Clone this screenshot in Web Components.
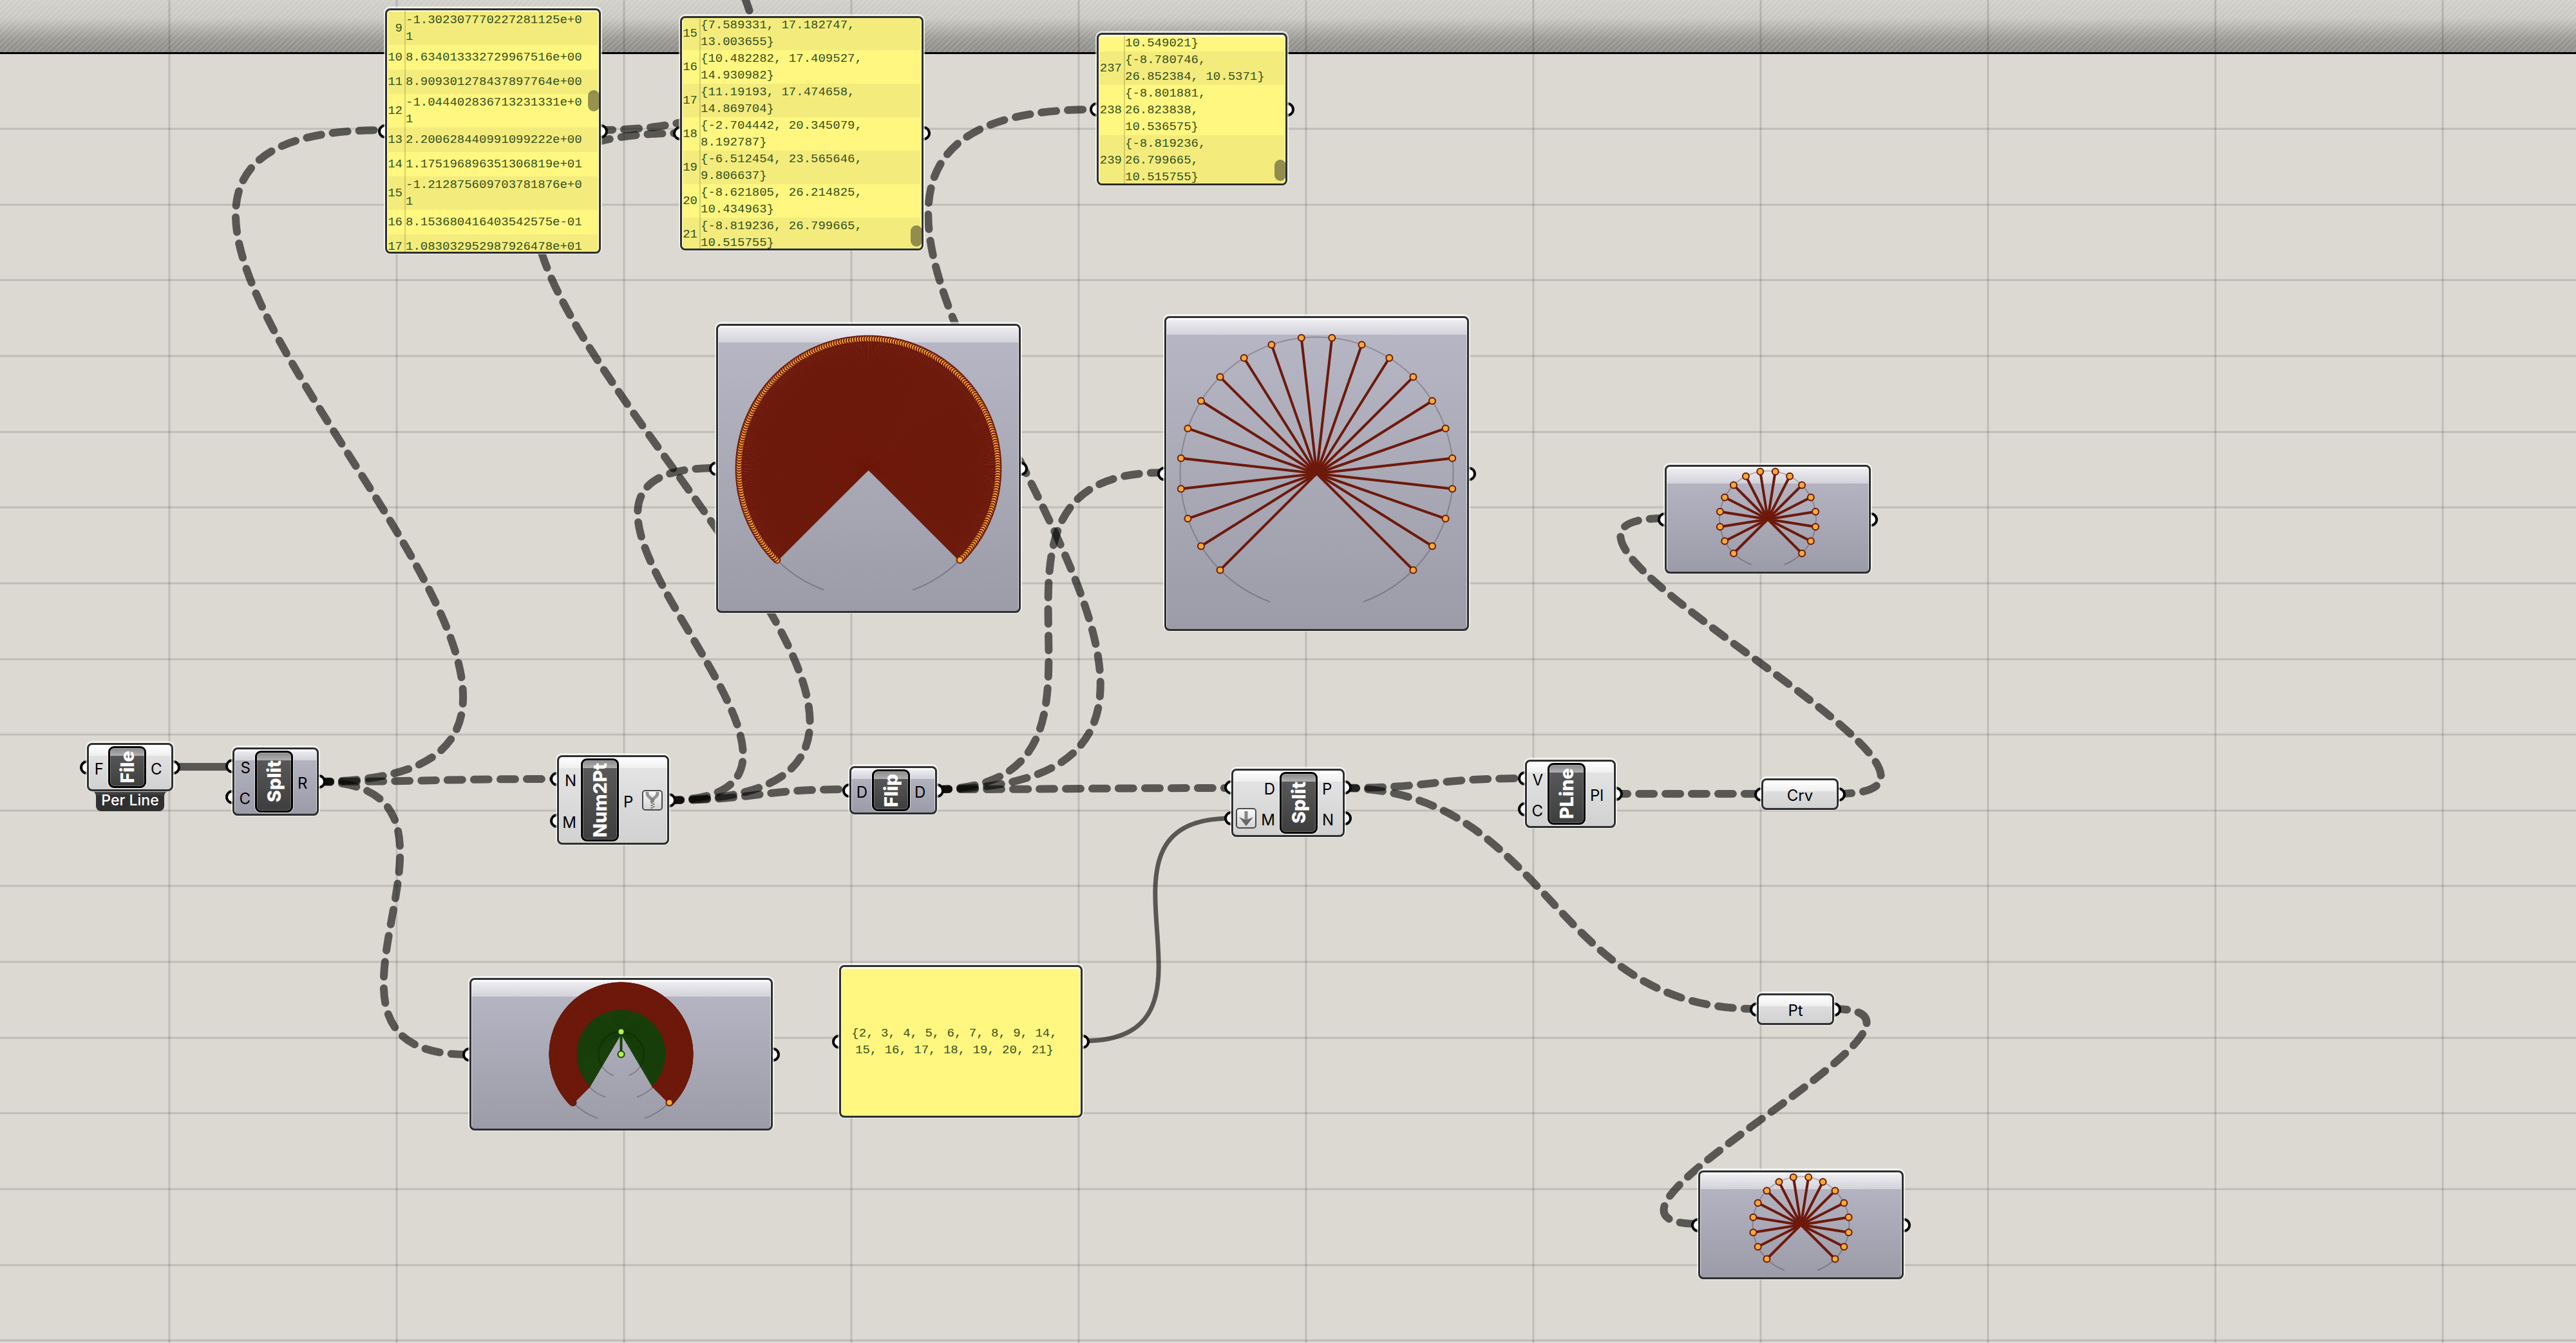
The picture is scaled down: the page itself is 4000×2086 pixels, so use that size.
<!DOCTYPE html>
<html lang="en">
<head>
<meta charset="utf-8">
<title>Grasshopper definition</title>
<style>
  body {
    margin: 0;
    font-family: Inter, "Liberation Sans", sans-serif;
    color: #000;
  }
</style>
</head>
<body>

<gh-canvas>
  <gh-panel x="598" y="13" width="335" height="381" gutter="31" pad="2" thumb="127">
    <gh-item index="9" shaded>-1.302307770227281125e+0<br>1</gh-item>
    <gh-item index="10">8.634013332729967516e+00</gh-item>
    <gh-item index="11" shaded>8.909301278437897764e+00</gh-item>
    <gh-item index="12">-1.044402836713231331e+0<br>1</gh-item>
    <gh-item index="13" shaded>2.200628440991099222e+00</gh-item>
    <gh-item index="14">1.175196896351306819e+01</gh-item>
    <gh-item index="15" shaded>-1.212875609703781876e+0<br>1</gh-item>
    <gh-item index="16">8.153680416403542575e-01</gh-item>
    <gh-item index="17" shaded>1.083032952987926478e+01</gh-item>
  </gh-panel>

  <gh-panel x="1056" y="25" width="378" height="364" gutter="31" pad="-2" thumb="325">
    <gh-item index="15" shaded>{7.589331, 17.182747,<br>13.003655}</gh-item>
    <gh-item index="16">{10.482282, 17.409527,<br>14.930982}</gh-item>
    <gh-item index="17" shaded>{11.19193, 17.474658,<br>14.869704}</gh-item>
    <gh-item index="18">{-2.704442, 20.345079,<br>8.192787}</gh-item>
    <gh-item index="19" shaded>{-6.512454, 23.565646,<br>9.806637}</gh-item>
    <gh-item index="20">{-8.621805, 26.214825,<br>10.434963}</gh-item>
    <gh-item index="21" shaded>{-8.819236, 26.799665,<br>10.515755}</gh-item>
  </gh-panel>

  <gh-panel x="1703" y="51" width="296" height="237" gutter="43" pad="0" thumb="197">
    <gh-item tight>10.549021}</gh-item>
    <gh-item index="237" shaded>{-8.780746,<br>26.852384, 10.5371}</gh-item>
    <gh-item index="238">{-8.801881,<br>26.823838,<br>10.536575}</gh-item>
    <gh-item index="239" shaded>{-8.819236,<br>26.799665,<br>10.515755}</gh-item>
  </gh-panel>

  <gh-panel x="1303" y="1499" width="378" height="237" note>{2, 3, 4, 5, 6, 7, 8, 9, 14,<br>15, 16, 17, 18, 19, 20, 21}</gh-panel>

  <gh-viewer x="1112" y="503" width="473" height="449" radius="201" count="240"></gh-viewer>
  <gh-viewer x="1808" y="491" width="473" height="489" radius="212" count="22"></gh-viewer>
  <gh-viewer x="2585" y="722" width="320" height="169" radius="75" count="16"></gh-viewer>
  <gh-viewer x="2637" y="1818" width="319" height="169" radius="75" count="16"></gh-viewer>
  <gh-viewer x="729" y="1519" width="471" height="237" radius="106" count="480" nested></gh-viewer>

  <gh-component x="135" y="1154" width="134" height="75" inputs="30" name="File" tag="Per Line">
    <gh-port slot="in">F</gh-port>
    <gh-port slot="out">C</gh-port>
  </gh-component>

  <gh-component x="361" y="1161" width="134" height="106" inputs="32" name="Split" tone="lilac">
    <gh-port slot="in">S</gh-port>
    <gh-port slot="in">C</gh-port>
    <gh-port slot="out">R</gh-port>
  </gh-component>

  <gh-component x="865" y="1173" width="174" height="139" inputs="34" name="Num2Pt">
    <gh-port slot="in">N</gh-port>
    <gh-port slot="in">M</gh-port>
    <gh-port slot="out" icon="simplify">P</gh-port>
  </gh-component>

  <gh-component x="1319" y="1190" width="136" height="75" inputs="32" name="Flip" tone="lilac">
    <gh-port slot="in">D</gh-port>
    <gh-port slot="out">D</gh-port>
  </gh-component>

  <gh-component x="1912" y="1194" width="176" height="106" inputs="72" name="Split">
    <gh-port slot="in">D</gh-port>
    <gh-port slot="in" icon="flatten">M</gh-port>
    <gh-port slot="out">P</gh-port>
    <gh-port slot="out">N</gh-port>
  </gh-component>

  <gh-component x="2368" y="1180" width="141" height="106" inputs="32" name="PLine">
    <gh-port slot="in">V</gh-port>
    <gh-port slot="in">C</gh-port>
    <gh-port slot="out">Pl</gh-port>
  </gh-component>

  <gh-param x="2735" y="1209" width="120" height="49">Crv</gh-param>
  <gh-param x="2728" y="1543" width="120" height="49">Pt</gh-param>
</gh-canvas>

<script>
// Rules that every box on the canvas shares: placement, capsule and grips.
const boxStyles = `
  :host {
    position: absolute;
    display: block;
    isolation: isolate;
  }
  .body {
    box-sizing: border-box;
    width: 100%;
    height: 100%;
    border: 3px solid #2e2f30;
    border-radius: 8px;
    box-shadow: 0 -1px 0 2px rgba(255, 255, 255, 0.65), inset 0 2px 0 1px rgba(255, 255, 255, 0.7);
  }
  .grip {
    position: absolute;
    z-index: -1;
    top: calc(50% - 11px);
    box-sizing: border-box;
    width: 22px;
    height: 22px;
    border: 4px solid #000;
    border-radius: 50%;
    background: #fff;
  }
  .grip.in { left: -11px; }
  .grip.out { right: -11px; }
`;

const greyFill = 'linear-gradient(#fff, #efefef) 0 0 / 100% 17px no-repeat, linear-gradient(#e6e6e6, #d1d1d1)';
const lilacFill = 'linear-gradient(#f1f0f4, #d2d2da) 0 0 / 100% var(--shine, 17px) no-repeat, linear-gradient(#b8b7c5, #9c9ba8)';

function place(el) {
  el.style.left = el.getAttribute('x') + 'px';
  el.style.top = el.getAttribute('y') + 'px';
  el.style.width = el.getAttribute('width') + 'px';
  el.style.height = el.getAttribute('height') + 'px';
}

// [x1, y1, x2, y2, kind]: output grip to input grip, ends tucked under the boxes
const wires = [
  [265, 1191, 364, 1191, 'item'],
  [490, 1214, 863, 1210],
  [490, 1214, 595, 202],
  [490, 1214, 727, 1638],
  [1034, 1243, 1110, 727],
  [1034, 1243, 1053, 207],
  [1034, 1243, 1317, 1226],
  [1450, 1226, 1910, 1224],
  [1450, 1226, 1806, 734],
  [1450, 1226, 1700, 170],
  [928, 202, 833, -998],
  [1681, 1617, 1912, 1271, 'thin'],
  [2083, 1224, 2366, 1209],
  [2083, 1224, 2726, 1567],
  [2504, 1233, 2733, 1233],
  [2852, 1233, 2585, 805],
  [2845, 1567, 2637, 1901]
];

class GhCanvas extends HTMLElement {
  constructor() {
    super();
    this.attachShadow({ mode: 'open' });
  }

  connectedCallback() {
    this.shadowRoot.innerHTML = `
      <style>
        :host {
          display: block;
          position: relative;
          min-height: 100vh;
          overflow: hidden;
          background: #dcd9d3;
        }
        .edge {
          height: 81px;
          border-bottom: 3px solid #000;
          background:
            repeating-linear-gradient(135deg, rgba(255, 255, 255, 0.13) 0 3px, transparent 3px 6px),
            linear-gradient(#d0cfc9, #c8c7c1 35%, #999893 75%, #8b8a86);
        }
        svg {
          position: absolute;
          inset: 0;
          width: 100%;
          height: 100%;
        }
        line { stroke: rgba(0, 0, 0, 0.13); stroke-width: 3; }
        path { fill: none; stroke: rgba(0, 0, 0, 0.6); stroke-width: 12; }
        .tree { stroke-dasharray: 23 18; stroke-linecap: round; }
        .thin { stroke-width: 7; }
      </style>
      <div class="edge"></div>
      <svg aria-hidden="true">${this.grid()}${wires.map(w => this.wire(w)).join('')}</svg>
      <slot></slot>
    `;
  }

  grid() {
    let out = '';
    for (let x = 263; x < window.innerWidth; x += 353) {
      out += `<line x1="${x}" x2="${x}" y1="0" y2="100%"/>`;
    }
    // 17 rows to every 2000px
    for (let i = 0; i * 2000 / 17 < window.innerHeight - 200; i++) {
      const y = 200 + Math.round(i * 2000 / 17);
      out += `<line x1="0" x2="100%" y1="${y}" y2="${y}"/>`;
    }
    return out;
  }

  wire([x1, y1, x2, y2, kind = 'tree']) {
    const d = Math.round(Math.max((x2 - x1) / 2, Math.abs(y2 - y1) * 0.74));
    return `<path class="${kind}" d="M${x1} ${y1}C${x1 + d} ${y1} ${x2 - d} ${y2} ${x2} ${y2}"/>`;
  }
}

class GhPanel extends HTMLElement {
  constructor() {
    super();
    this.attachShadow({ mode: 'open' });
  }

  connectedCallback() {
    place(this);
    const note = this.hasAttribute('note');
    const thumb = this.getAttribute('thumb');
    this.shadowRoot.innerHTML = `
      <style>
        ${boxStyles}
        :host {
          --gutter: ${this.getAttribute('gutter') || 0}px;
          font: 19px/26px "Liberation Mono", monospace;
          color: #35501f;
        }
        .body { background: #fff780; overflow: hidden; }
        .list { margin: ${this.getAttribute('pad') || 0}px 2px 0; }
        .note {
          display: flex;
          align-items: center;
          justify-content: center;
          padding-right: 20px;
          text-align: center;
        }
        .rule {
          position: absolute;
          top: 4px;
          bottom: 3px;
          left: calc(var(--gutter) - 1px);
          width: 2px;
          background: rgba(0, 0, 0, 0.15);
        }
        .thumb {
          position: absolute;
          top: ${thumb}px;
          right: 2px;
          width: 18px;
          height: 33px;
          border-radius: 9px;
          background: rgba(50, 45, 30, 0.5);
        }
      </style>
      <span class="grip in"></span>
      <span class="grip out"></span>
      <div class="body ${note ? 'note' : ''}">
        <div class="${note ? '' : 'list'}" ${note ? '' : 'role="list"'}><slot></slot></div>
      </div>
      ${note ? '' : '<span class="rule"></span><span class="thumb"></span>'}
    `;
  }
}

class GhItem extends HTMLElement {
  constructor() {
    super();
    this.attachShadow({ mode: 'open' });
  }

  connectedCallback() {
    this.setAttribute('role', 'listitem');
    this.shadowRoot.innerHTML = `
      <style>
        :host {
          display: grid;
          grid-template-columns: calc(var(--gutter) - 9px) auto;
          column-gap: 5px;
          align-items: center;
          min-height: 38px;
          white-space: nowrap;
        }
        :host([shaded]) { background: #f3ec7d; }
        :host([tight]) { min-height: 26px; }
        .index { display: flex; justify-content: flex-end; }
      </style>
      <span class="index">${this.getAttribute('index') || ''}</span>
      <span><slot></slot></span>
    `;
  }
}

class GhViewer extends HTMLElement {
  constructor() {
    super();
    this.attachShadow({ mode: 'open' });
  }

  connectedCallback() {
    place(this);
    const w = this.getAttribute('width') - 6;
    const h = this.getAttribute('height') - 6;
    this.shadowRoot.innerHTML = `
      <style>
        ${boxStyles}
        :host { --shine: 26px; }
        .body { background: ${lilacFill}; }
        svg { display: block; width: 100%; height: 100%; }
        .ring { fill: none; stroke: rgba(0, 0, 0, 0.22); stroke-width: 2; }
        .spoke { stroke: #6d190b; stroke-width: 4; stroke-linecap: round; }
        .leaf { fill: #f6a935; stroke: #6d190b; stroke-width: 2; }
        .spoke.green { stroke: #193f0b; }
        .leaf.green { fill: #b5f056; stroke: #193f0b; }
      </style>
      <span class="grip in"></span>
      <span class="grip out"></span>
      <div class="body">
        <svg viewBox="${-w / 2} ${-h / 2} ${w} ${h}" role="img" aria-label="Data tree">${this.tree()}</svg>
      </div>
    `;
  }

  // point on a ring, angle in degrees clockwise from the top
  point(r, angle) {
    const a = angle * Math.PI / 180;
    return [(r * Math.sin(a)).toFixed(2), (-r * Math.cos(a)).toFixed(2)];
  }

  ring(r) {
    return `<path class="ring" d="M${this.point(r, 200)}A${r} ${r} 0 1 1 ${this.point(r, 160)}"/>`;
  }

  spoke(from, to, kind = '') {
    return `<line class="spoke ${kind}" x1="${from[0]}" y1="${from[1]}" x2="${to[0]}" y2="${to[1]}"/>`;
  }

  leaf(at, kind = '') {
    return `<circle class="leaf ${kind}" cx="${at[0]}" cy="${at[1]}" r="5"/>`;
  }

  tree() {
    const r = Number(this.getAttribute('radius'));
    const count = Number(this.getAttribute('count'));
    const nested = this.hasAttribute('nested');
    const angles = Array.from({ length: count }, (_, i) => -135 + 270 * i / (count - 1));
    const root = [0, 0];
    let out = this.ring(r);

    if (nested) {
      const inner = Math.round(r / 3);
      const middle = Math.round(r * 2 / 3);
      const branch = this.point(inner, 0);
      out += this.ring(middle);
      out += angles.map(a => this.spoke(branch, this.point(middle, a), 'green')).join('');
      out += angles.map(a => this.spoke(this.point(middle, a), this.point(r, a))).join('');
      out += this.ring(inner);
      out += this.spoke(root, branch, 'green') + this.leaf(root, 'green') + this.leaf(branch, 'green');
    } else {
      out += angles.map(a => this.spoke(root, this.point(r, a))).join('');
    }
    return out + angles.map(a => this.leaf(this.point(r, a))).join('');
  }
}

class GhComponent extends HTMLElement {
  constructor() {
    super();
    this.attachShadow({ mode: 'open' });
  }

  connectedCallback() {
    place(this);
    const tag = this.getAttribute('tag');
    const fill = this.getAttribute('tone') === 'lilac' ? lilacFill : greyFill;
    this.shadowRoot.innerHTML = `
      <style>
        ${boxStyles}
        .body {
          display: grid;
          grid-template-columns: ${this.getAttribute('inputs')}px 59px 1fr;
          padding: 2px 0;
          background: ${fill};
        }
        .ports { display: flex; flex-direction: column; }
        .name {
          box-sizing: border-box;
          display: flex;
          align-items: center;
          justify-content: center;
          border: 3px solid #000;
          border-radius: 9px;
          background:
            linear-gradient(#8a8a8a, #b0b0b0) 0 0 / 100% 12px no-repeat,
            linear-gradient(#5c5c5c, #3e3e3e);
          box-shadow: 0 0 0 1px rgba(255, 255, 255, 0.6), inset 0 0 0 1px rgba(255, 255, 255, 0.25);
          color: #fff;
          font-size: 29px;
          font-weight: 800;
          line-height: 32px;
        }
        .name span { writing-mode: vertical-rl; transform: rotate(180deg); }
        .tag {
          position: absolute;
          z-index: -1;
          top: 100%;
          left: 14px;
          right: 14px;
          padding: 1px 0 3px;
          border-radius: 0 0 8px 8px;
          background: linear-gradient(#4a4a4a, #303030 8px);
          color: #fff;
          font-size: 23px;
          font-weight: 500;
          line-height: 27px;
          text-align: center;
          white-space: nowrap;
        }
        .tag::before, .tag::after {
          content: "";
          position: absolute;
          top: 0;
          width: 6px;
          height: 6px;
        }
        .tag::before { right: 100%; background: radial-gradient(circle at 0 100%, transparent 5px, #3c3c3c 6px); }
        .tag::after { left: 100%; background: radial-gradient(circle at 100% 100%, transparent 5px, #3c3c3c 6px); }
      </style>
      <div class="body">
        <div class="ports"><slot name="in"></slot></div>
        <div class="name"><span>${this.getAttribute('name')}</span></div>
        <div class="ports"><slot name="out"></slot></div>
      </div>
      ${tag ? `<div class="tag">${tag}</div>` : ''}
    `;
  }
}

const icons = {
  flatten: `
    <path d="M16 5v20" stroke="#858585" stroke-width="5"/>
    <path d="M5 14l11 5 11-5-11 14z" fill="#666"/>`,
  simplify: `
    <path d="M8 3v3c0 4 6 6 8 10 2-4 8-6 8-10V3" fill="none" stroke="#949494" stroke-width="5"/>
    <path d="M16 13v6" stroke="#858585" stroke-width="6"/>
    <path d="M15 19v10" stroke="#777" stroke-width="3" stroke-dasharray="2 2"/>
    <path d="M18 21v8" stroke="#777" stroke-width="3" stroke-dasharray="2 2"/>`
};

class GhPort extends HTMLElement {
  constructor() {
    super();
    this.attachShadow({ mode: 'open' });
  }

  connectedCallback() {
    const icon = this.getAttribute('icon');
    this.shadowRoot.innerHTML = `
      <style>
        ${boxStyles}
        :host {
          position: relative;
          isolation: auto;
          display: flex;
          flex: 1;
          align-items: center;
          padding: 0 7px;
          font-size: 24px;
          line-height: 30px;
        }
        :host([slot="in"]) { flex-direction: row-reverse; }
        :host([slot="in"][icon]) { padding-left: 4px; }
        :host([icon]) { justify-content: space-between; }
        .label { padding-top: 6px; }
        .grip.in { left: -14px; }
        .grip.out { right: -14px; }
        svg {
          box-sizing: border-box;
          width: 32px;
          height: 32px;
          border: 2px solid #4a4a4a;
          border-radius: 5px;
          background: linear-gradient(#fafafa, #d4d4d4);
        }
      </style>
      <span class="grip ${this.slot}"></span>
      <span class="label"><slot></slot></span>
      ${icon ? `<svg viewBox="2 2 28 28" aria-hidden="true">${icons[icon]}</svg>` : ''}
    `;
  }
}

class GhParam extends HTMLElement {
  constructor() {
    super();
    this.attachShadow({ mode: 'open' });
  }

  connectedCallback() {
    place(this);
    this.shadowRoot.innerHTML = `
      <style>
        ${boxStyles}
        .body {
          display: flex;
          align-items: center;
          justify-content: center;
          padding-top: 4px;
          background: ${greyFill};
          font-size: 24px;
          line-height: 30px;
        }
      </style>
      <span class="grip in"></span>
      <span class="grip out"></span>
      <div class="body"><slot></slot></div>
    `;
  }
}

customElements.define('gh-canvas', GhCanvas);
customElements.define('gh-panel', GhPanel);
customElements.define('gh-item', GhItem);
customElements.define('gh-viewer', GhViewer);
customElements.define('gh-component', GhComponent);
customElements.define('gh-port', GhPort);
customElements.define('gh-param', GhParam);
</script>
</body>
</html>
